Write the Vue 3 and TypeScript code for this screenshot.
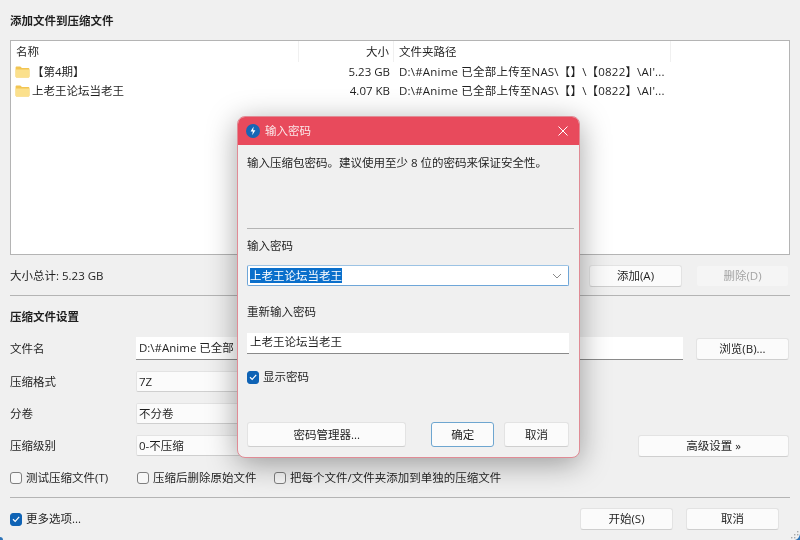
<script setup lang="ts">
interface FileRow { name: string; size: string; path: string }
const files: FileRow[] = [
  { name: '【第4期】', size: '5.23 GB', path: "D:\\#Anime 已全部上传至NAS\\【】\\【0822】\\AI'..." },
  { name: '上老王论坛当老王', size: '4.07 KB', path: "D:\\#Anime 已全部上传至NAS\\【】\\【0822】\\AI'..." },
]
</script>

<template>
  <div class="window">
    <h1 class="title">添加文件到压缩文件</h1>
    <section class="list">
      <div class="thead">
        <span class="c-name">名称</span>
        <span class="c-size">大小</span>
        <span class="c-path">文件夹路径</span>
      </div>
      <div v-for="f in files" :key="f.name" class="trow">
        <span class="c-name cell">
          <svg class="folder" viewBox="0 0 16 13" width="15" height="12">
            <path d="M0.5 2C0.5 1.2 1.1 0.6 2 0.6H5.6L7.4 2.2H14C15 2.2 15.5 2.8 15.5 3.6V11C15.5 11.9 15 12.4 14 12.4H2C1.1 12.4 0.5 11.9 0.5 11Z" fill="#f2c552" />
            <path d="M0.5 3.8H15.5V11C15.5 11.9 15 12.4 14 12.4H2C1.1 12.4 0.5 11.9 0.5 11Z" fill="#fbe08c" />
          </svg>
          {{ f.name }}
        </span>
        <span class="c-size">{{ f.size }}</span>
        <span class="c-path">{{ f.path }}</span>
      </div>
    </section>

    <div class="summary">
      <span>大小总计: 5.23 GB</span>
      <div class="summary-btns">
        <button class="btn w93">添加(A)</button>
        <button class="btn w93 disabled">删除(D)</button>
      </div>
    </div>

    <hr class="rule" />
    <h2 class="subtitle">压缩文件设置</h2>

    <div class="form">
      <label>文件名</label>
      <div class="text-input">D:\#Anime 已全部</div>
      <button class="btn browse">浏览(B)...</button>

      <label>压缩格式</label>
      <div class="combo">7Z</div>
      <span></span>

      <label>分卷</label>
      <div class="combo">不分卷</div>
      <span></span>

      <label>压缩级别</label>
      <div class="combo">0-不压缩</div>
      <button class="btn advanced">高级设置 »</button>
    </div>

    <div class="checks">
      <label class="check c1"><i class="box"></i>测试压缩文件(T)</label>
      <label class="check c2"><i class="box"></i>压缩后删除原始文件</label>
      <label class="check"><i class="box"></i>把每个文件/文件夹添加到单独的压缩文件</label>
    </div>

    <hr class="rule rule-low" />

    <div class="footer">
      <label class="check">
        <i class="box on">
          <svg viewBox="0 0 12 12" width="12" height="12"><path d="M3 6.3L5.2 8.4L9.2 3.9" fill="none" stroke="#fff" stroke-width="1.2" /></svg>
        </i>更多选项...
      </label>
      <div class="footer-btns">
        <button class="btn w93">开始(S)</button>
        <button class="btn w93">取消</button>
      </div>
    </div>

    <svg class="grip" viewBox="0 0 10 10" width="10" height="10">
      <g fill="#a9a9a9"><rect x="7" y="1" width="1.4" height="1.4" /><rect x="4" y="4" width="1.4" height="1.4" /><rect x="7" y="4" width="1.4" height="1.4" /><rect x="1" y="7" width="1.4" height="1.4" /><rect x="4" y="7" width="1.4" height="1.4" /></g>
      <path d="M10 4V10H5Q9 9 10 4Z" fill="#2f74b8" />
    </svg>
    <i class="corner"></i>

    <div class="dialog">
      <header class="dlg-bar">
        <svg class="dlg-icon" viewBox="0 0 14 14" width="14" height="14">
          <circle cx="7" cy="7" r="7" fill="#1766b5" />
          <path d="M7.6 2.6L4.6 7.6H6.8L6.2 11.2L9.4 6.2H7.2Z" fill="#fff" />
        </svg>
        <span class="dlg-title">输入密码</span>
        <svg class="dlg-close" viewBox="0 0 10 10" width="10" height="10">
          <path d="M0.5 0.5L9.5 9.5M9.5 0.5L0.5 9.5" stroke="#fff" stroke-width="1" fill="none" />
        </svg>
      </header>
      <div class="dlg-body">
        <p class="dlg-note">输入压缩包密码。建议使用至少 8 位的密码来保证安全性。</p>
        <hr class="dlg-rule" />
        <div class="dlg-label first">输入密码</div>
        <div class="pw-combo">
          <span class="sel">上老王论坛当老王</span>
          <svg viewBox="0 0 10 6" width="10" height="6"><path d="M1 1L5 5L9 1" fill="none" stroke="#8a8a8a" stroke-width="1" /></svg>
        </div>
        <div class="dlg-label second">重新输入密码</div>
        <div class="pw-input">上老王论坛当老王</div>
        <label class="check show">
          <i class="box on">
            <svg viewBox="0 0 12 12" width="12" height="12"><path d="M3 6.3L5.2 8.4L9.2 3.9" fill="none" stroke="#fff" stroke-width="1.2" /></svg>
          </i>显示密码
        </label>
        <div class="dlg-btns">
          <button class="btn mgr">密码管理器...</button>
          <button class="btn ok">确定</button>
          <button class="btn cancel">取消</button>
        </div>
      </div>
    </div>
  </div>
</template>

<style scoped>
.window {
  position: relative;
  width: 800px;
  height: 540px;
  box-sizing: border-box;
  overflow: hidden;
  padding: 14px 10px 0;
  background: #f0f0f0;
  color: #1f1f1f;
  font: 11.5px/14px "Open Sans", "Noto Sans CJK SC", sans-serif;
  filter: blur(0.25px);
}
.title, .subtitle {
  margin: 0;
  font-size: 11.5px;
  line-height: 14px;
  font-weight: 700;
}
.list {
  margin-top: 12px;
  height: 215px;
  box-sizing: border-box;
  background: #fff;
  border: 1px solid #b4b4b4;
  padding-left: 5px;
}
.thead, .trow {
  display: grid;
  grid-template-columns: 283px 95px 1fr;
}
.thead {
  height: 21px;
  align-items: center;
}
.thead span { height: 21px; line-height: 21px; }
.thead .c-name { border-right: 1px solid #f0f0f0; }
.thead .c-size { border-right: 1px solid #f0f0f0; }
.thead .c-path { width: 277px; box-sizing: border-box; border-right: 1px solid #f0f0f0; }
.trow {
  height: 19px;
  line-height: 19px;
}
.cell {
  display: flex;
  align-items: center;
}
.folder { margin-right: 2px; flex: none; margin-left: -1px; }
.c-size {
  text-align: right;
  padding-right: 4px;
  box-sizing: border-box;
}
.c-path {
  padding-left: 5px;
  white-space: nowrap;
}
.trow .c-path { letter-spacing: 0.2px; }
.summary {
  height: 40px;
  padding-top: 2px;
  box-sizing: border-box;
  display: flex;
  align-items: center;
  justify-content: space-between;
}
.summary-btns {
  display: flex;
  gap: 14px;
  margin-right: 1px;
}
.btn {
  box-sizing: border-box;
  height: 22px;
  padding: 0;
  font: inherit;
  color: #1f1f1f;
  background: #fbfbfb;
  border: 1px solid #e3e3e3;
  border-bottom-color: #cfcfcf;
  border-radius: 3px;
}
.w93 { width: 93px; }
.disabled {
  background: #f5f5f5;
  border-color: #f0f0f0;
  color: #a3a3a3;
}
.rule {
  margin: 0;
  border: 0;
  border-top: 1px solid #b4b4b4;
}
.subtitle { margin-top: 14px; }
.form {
  margin-top: 13px;
  display: grid;
  grid-template-columns: 126px 547px 106px;
  grid-template-rows: 23px 21px 21px 21px;
  row-gap: 11px;
  align-items: center;
}
.form label { line-height: 14px; }
.text-input {
  box-sizing: border-box;
  height: 23px;
  padding: 2px 3px;
  background: #fff;
  border-bottom: 1px solid #8a8a8a;
  line-height: 18px;
  white-space: nowrap;
  overflow: hidden;
}
.combo {
  box-sizing: border-box;
  height: 21px;
  width: 300px;
  padding-left: 2px;
  background: #fbfbfb;
  border: 1px solid #e3e3e3;
  border-bottom-color: #cfcfcf;
  border-radius: 2px;
  line-height: 19px;
}
.browse { width: 93px; margin-left: 13px; }
.advanced {
  width: 151px;
  margin-left: -45px;
}
.checks {
  margin-top: 14px;
  height: 16px;
  display: flex;
}
.check {
  display: flex;
  align-items: center;
  gap: 4px;
  line-height: 16px;
  white-space: nowrap;
}
.c1 { width: 127px; }
.c2 { width: 137px; }
.box {
  box-sizing: border-box;
  width: 12px;
  height: 12px;
  flex: none;
  background: #f7f7f7;
  border: 1px solid #7f7f7f;
  border-radius: 3px;
  display: flex;
  align-items: center;
  justify-content: center;
}
.box.on {
  background: #0f63b5;
  border-color: #0f63b5;
  height: 13px;
}
.box svg { flex: none; }
.rule-low { margin-top: 11px; }
.footer {
  height: 42px;
  display: flex;
  align-items: center;
  justify-content: space-between;
}
.footer-btns {
  display: flex;
  gap: 13px;
  margin-right: 11px;
}
.grip {
  position: absolute;
  right: 0;
  bottom: 0;
}
.corner {
  position: absolute;
  left: -3px;
  bottom: -3px;
  width: 6px;
  height: 6px;
  border-radius: 50%;
  background: #2f74b8;
}
.dialog {
  position: absolute;
  left: 237px;
  top: 116px;
  width: 343px;
  height: 342px;
  box-sizing: border-box;
  border: 1px solid #e08b95;
  border-radius: 8px;
  background: #f0f0f0;
  box-shadow: 0 6px 30px rgba(0, 0, 0, 0.36);
  overflow: hidden;
  display: flex;
  flex-direction: column;
}
.dlg-bar {
  flex: none;
  height: 28px;
  background: #e84a5c;
  display: flex;
  align-items: center;
  padding: 0 11px 0 8px;
  color: #fff;
}
.dlg-icon { flex: none; }
.dlg-title {
  margin-left: 5px;
  flex: 1;
  color: #fbe7e9;
}
.dlg-body {
  padding: 11px 10px 0 9px;
  flex: 1;
  display: flex;
  flex-direction: column;
}
.dlg-note {
  margin: 0;
  height: 72px;
  line-height: 14px;
}
.dlg-rule {
  margin: 0 -5px 0 0;
  border: 0;
  border-top: 1px solid #b4b4b4;
}
.dlg-label { height: 14px; }
.dlg-label.first { margin-top: 10px; }
.dlg-label.second { margin-top: 19px; }
.pw-combo {
  margin-top: 12px;
  box-sizing: border-box;
  height: 21px;
  padding: 0 6px 0 2px;
  background: #fff;
  border: 1px solid #6ea6d8;
  border-top-color: #9cc3e4;
  border-radius: 2px;
  display: flex;
  align-items: center;
  justify-content: space-between;
}
.sel {
  background: #0a6fcb;
  color: #fff;
  line-height: 15px;
}
.pw-input {
  margin-top: 14px;
  box-sizing: border-box;
  height: 21px;
  padding-left: 3px;
  background: #fff;
  border-bottom: 1px solid #8a8a8a;
  line-height: 18px;
}
.show { margin-top: 15px; }
.dlg-btns {
  margin-top: 37px;
  display: flex;
}
.mgr { width: 160px; height: 25px; }
.ok {
  width: 63px;
  height: 25px;
  margin-left: 25px;
  border: 1px solid #6ea6d0;
}
.cancel { width: 65px; height: 25px; margin-left: 10px; }
</style>
